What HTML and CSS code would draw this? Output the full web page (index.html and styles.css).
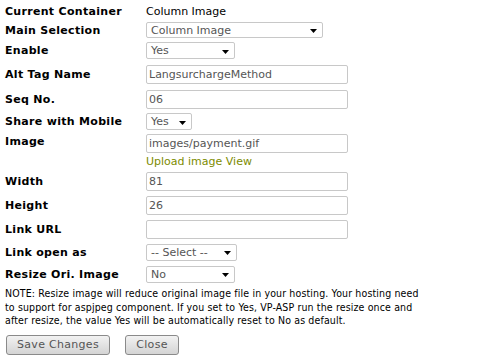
FILE: index.html
```html
<!DOCTYPE html>
<html>
<head>
<meta charset="utf-8">
<link rel="stylesheet" href="styles.css">
</head>
<body>
<div class="form">
  <div class="row r1"><div class="label">Current Container</div><div class="value">Column Image</div></div>
  <div class="row r2"><div class="label">Main Selection</div><div class="select w-main h16"><span>Column Image</span><svg class="arrow" width="7" height="4" viewBox="0 0 7 4"><path d="M0 0H7L3.5 4Z" fill="#000"/></svg></div></div>
  <div class="row r3"><div class="label">Enable</div><div class="select w-89"><span>Yes</span><svg class="arrow" width="7" height="4" viewBox="0 0 7 4"><path d="M0 0H7L3.5 4Z" fill="#000"/></svg></div></div>
  <div class="row r4"><div class="label">Alt Tag Name</div><div class="input">LangsurchargeMethod</div></div>
  <div class="row r5"><div class="label">Seq No.</div><div class="input">06</div></div>
  <div class="row r6"><div class="label">Share with Mobile</div><div class="select w-46"><span>Yes</span><svg class="arrow" width="7" height="4" viewBox="0 0 7 4"><path d="M0 0H7L3.5 4Z" fill="#000"/></svg></div></div>
  <div class="row r7"><div class="label lbl-top">Image</div><div class="col"><div class="input">images/payment.gif</div><div class="links"><a class="link">Upload image</a> <a class="link">View</a></div></div></div>
  <div class="row r8"><div class="label">Width</div><div class="input">81</div></div>
  <div class="row r9"><div class="label">Height</div><div class="input">26</div></div>
  <div class="row r10"><div class="label">Link URL</div><div class="input"></div></div>
  <div class="row r11"><div class="label">Link open as</div><div class="select w-91"><span>-- Select --</span><svg class="arrow" width="7" height="4" viewBox="0 0 7 4"><path d="M0 0H7L3.5 4Z" fill="#000"/></svg></div></div>
  <div class="row r12"><div class="label">Resize Ori. Image</div><div class="select w-89"><span>No</span><svg class="arrow" width="7" height="4" viewBox="0 0 7 4"><path d="M0 0H7L3.5 4Z" fill="#000"/></svg></div></div>
  <div class="note">NOTE: Resize image will reduce original image file in your hosting. Your hosting need<br>to support for aspjpeg component. If you set to Yes, VP-ASP run the resize once and<br>after resize, the value Yes will be automatically reset to No as default.</div>
  <div class="buttons"><button class="btn btn-save">Save Changes</button><button class="btn btn-close">Close</button></div>
</div>
</body>
</html>
```
FILE: styles.css
```css
html, body { margin: 0; padding: 0; background: #fff; }
body { font-family: "DejaVu Sans", Verdana, sans-serif; font-size: 11px; color: #000; }
.form { padding: 2px 0 0 5px; }
.row { display: flex; align-items: center; }
.label { width: 141px; flex-shrink: 0; font-family: "DejaVu Sans", Verdana, sans-serif; font-weight: bold; font-size: 11px; letter-spacing: 0.3px; line-height: 13px; }
.value { line-height: 13px; }
.r1 { height: 18px; }
.r2 { height: 20px; }
.r3 { height: 21px; }
.r4 { height: 26px; }
.r5 { height: 24px; }
.r6 { height: 21px; }
.r7 { height: 37px; align-items: flex-start; }
.r8, .r9, .r10 { height: 24px; }
.r11, .r12 { height: 22px; }
.lbl-top { padding-top: 3px; }
.col { display: flex; flex-direction: column; padding-top: 2px; }
.input { box-sizing: border-box; width: 202px; height: 19px; border: 1px solid #c8c8c8; border-radius: 2px; padding: 0 2px; line-height: 17px; color: #555; white-space: nowrap; overflow: hidden; }
.links { margin-top: 2px; line-height: 13px; }
.link { color: #7d8c00; text-decoration: none; }
.select { box-sizing: border-box; height: 17px; border: 1px solid #c8c8c8; border-radius: 2px; padding: 0 5px 0 4px; display: flex; align-items: center; justify-content: space-between; color: #555; white-space: nowrap; }
.select span { line-height: 15px; }
.arrow { flex-shrink: 0; margin-top: 2px; }
.h16 { height: 16px; }
.w-main { width: 177px; }
.w-89 { width: 89px; }
.w-46 { width: 46px; }
.w-91 { width: 91px; }
.note { margin-top: 2px; font-family: "DejaVu Sans Condensed", "DejaVu Sans", sans-serif; font-size: 10.5px; letter-spacing: 0.14px; line-height: 13.5px; white-space: nowrap; }
.buttons { display: flex; gap: 15px; margin-top: 7px; padding-left: 1px; }
.btn { box-sizing: border-box; height: 20px; padding: 0; border: 1px solid #8a8a8a; border-radius: 3px; background: linear-gradient(#f2f2f2, #d4d4d4); color: #555; font-family: "DejaVu Sans", Verdana, sans-serif; font-size: 11px; line-height: 18px; letter-spacing: 0.3px; }
.btn-save { width: 104px; }
.btn-close { width: 54px; }
```
